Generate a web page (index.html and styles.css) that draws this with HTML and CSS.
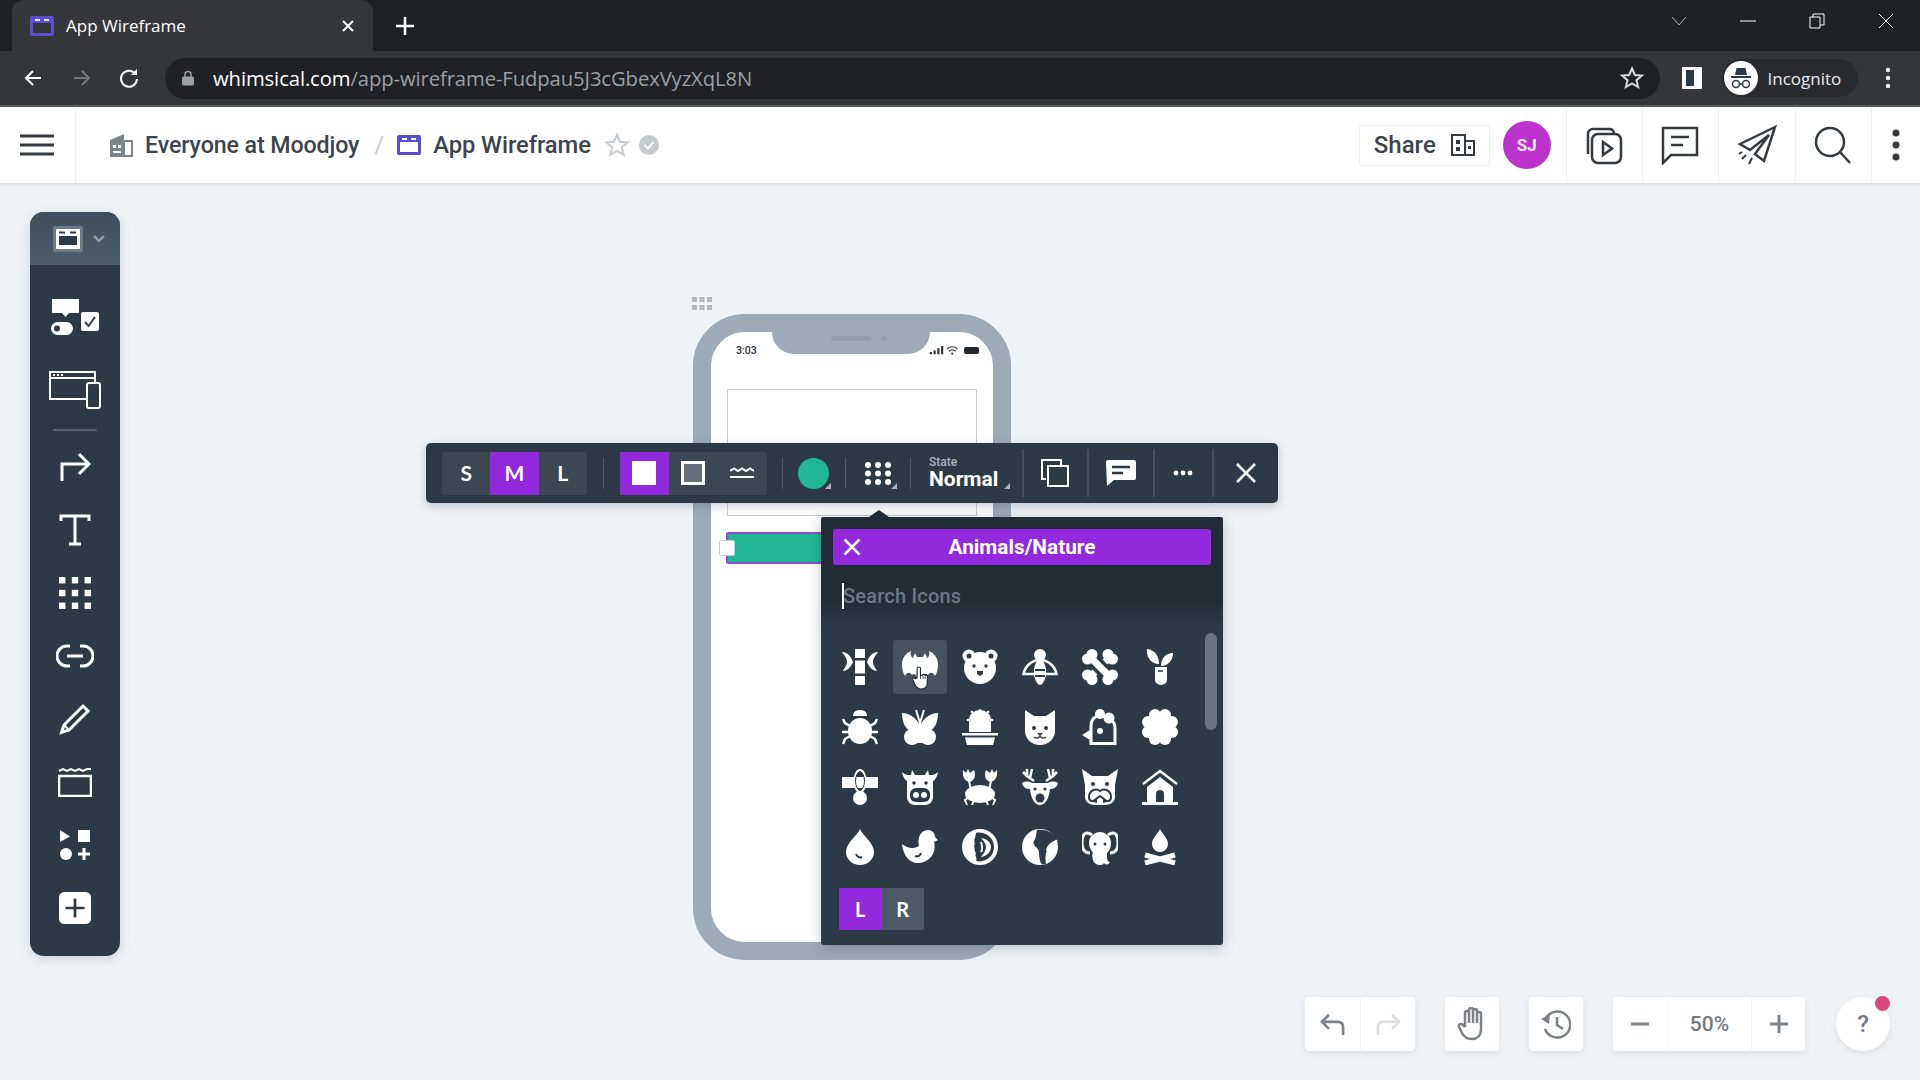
FILE: index.html
```html
<!DOCTYPE html>
<html lang="en">
<head>
<meta charset="utf-8">
<title>App Wireframe</title>
<link rel="stylesheet" href="styles.css">
</head>
<body>
<div class="tabstrip">
  <div class="tab">
    <svg class="fav" viewBox="0 0 24 20"><rect width="24" height="20" rx="2" class="f-purple"/><rect x="3" y="7" width="18" height="10" class="f-dark"/><rect x="5" y="3" width="5" height="2" class="f-light"/><rect x="14" y="3" width="5" height="2" class="f-light"/></svg>
    <span class="tab-title">App Wireframe</span>
    <svg class="tab-x" viewBox="0 0 14 14"><path d="M2 2L12 12M12 2L2 12" class="s-white s2"/></svg>
  </div>
  <svg class="newtab" viewBox="0 0 20 20"><path d="M10 1V19M1 10H19" class="s-white s25"/></svg>
  <div class="winctl">
    <svg viewBox="0 0 16 10" class="win-chev"><path d="M1 1L8 9L15 1" class="s-grey s1"/></svg>
    <svg viewBox="0 0 16 2" class="win-min"><path d="M0 1H16" class="s-white s1"/></svg>
    <svg viewBox="0 0 16 16" class="win-res"><path d="M1 4H11V15H1ZM4 4V1H15V12H11" class="s-white s1"/></svg>
    <svg viewBox="0 0 16 16" class="win-close"><path d="M1 1L15 15M15 1L1 15" class="s-white s1"/></svg>
  </div>
</div>
<div class="navbar">
  <svg class="nav-ic nav-back" viewBox="0 0 20 20"><path d="M18 10H3M10 3L3 10L10 17" class="s-white s2"/></svg>
  <svg class="nav-ic nav-fwd" viewBox="0 0 20 20"><path d="M2 10H17M10 3L17 10L10 17" class="s-dim s2"/></svg>
  <svg class="nav-ic nav-rel" viewBox="0 0 20 20"><path d="M16.5 6A8 8 0 1 0 18 11" class="s-white s2"/><path d="M18 1V7H12Z" class="f-white"/></svg>
  <div class="omni">
    <svg class="lock" viewBox="0 0 12 16"><path d="M3 7V4.500a3 3 0 0 1 6 0V7" class="s-lock s15"/><rect y="6.500" width="12" height="9" rx="1.500" class="f-lock"/></svg>
    <span class="url"><span class="url-host">whimsical.com</span>/app-wireframe-Fudpau5J3cGbexVyzXqL8N</span>
    <svg class="omni-star" viewBox="0 0 24 24"><path d="M12 2.500L14.800 9L21.800 9.600L16.500 14.200L18.100 21L12 17.400L5.900 21L7.500 14.200L2.200 9.600L9.200 9Z" class="s-light s2"/></svg>
  </div>
  <svg class="nav-side" viewBox="0 0 20 22"><rect width="20" height="22" rx="1" class="f-white"/><rect x="4" y="3" width="8" height="16" class="f-tool"/></svg>
  <div class="incog">
    <svg class="incog-ic" viewBox="0 0 34 34"><circle cx="17" cy="17" r="17" class="f-white"/><path d="M7 15H27V17H7ZM11 14L12.500 7H21.500L23 14Z" class="f-tool"/><circle cx="12" cy="23" r="3.500" class="s-tool s15"/><circle cx="22" cy="23" r="3.500" class="s-tool s15"/><path d="M15.500 23H18.500" class="s-tool s15"/></svg>
    <span>Incognito</span>
  </div>
  <svg class="nav-more" viewBox="0 0 6 22"><circle cx="3" cy="3" r="2.200" class="f-white"/><circle cx="3" cy="11" r="2.200" class="f-white"/><circle cx="3" cy="19" r="2.200" class="f-white"/></svg>
</div>
<header class="appbar">
  <div class="menu-cell"><svg class="burger" viewBox="0 0 34 22"><path d="M0 2H34M0 11H34M0 20H34" class="s-ink s3"/></svg></div>
  <nav class="crumbs">
    <svg class="org" viewBox="0 0 24 24"><path d="M1 7L15 1V24H1Z" class="f-org"/><path d="M15 8H23V23H15Z" class="s-org s2"/><rect x="4" y="12" width="3" height="3" class="f-white"/><rect x="9" y="12" width="3" height="3" class="f-white"/><rect x="4" y="18" width="8" height="2" class="f-white"/></svg>
    <span class="crumb crumb-org">Everyone at Moodjoy</span>
    <span class="slash">/</span>
    <svg class="doc" viewBox="0 0 24 20"><rect width="24" height="20" rx="2" class="f-purple"/><rect x="3" y="7" width="18" height="10" class="f-white"/><rect x="5" y="3" width="5" height="2" class="f-white"/><rect x="14" y="3" width="5" height="2" class="f-white"/></svg>
    <span class="crumb">App Wireframe</span>
    <svg class="c-star" viewBox="0 0 24 24"><path d="M12 2.500L14.800 9L21.800 9.600L16.500 14.200L18.100 21L12 17.400L5.900 21L7.500 14.200L2.200 9.600L9.200 9Z" class="s-mute s2"/></svg>
    <svg class="c-check" viewBox="0 0 20 20"><circle cx="10" cy="10" r="10" class="f-mute"/><path d="M5.500 10L9 13.500L14.500 7" class="s-white s2"/></svg>
  </nav>
  <div class="actions">
    <button class="share"><span>Share</span><svg viewBox="0 0 24 22" class="share-ic"><path d="M1 1H14V21H1ZM14 7H23V21H14Z" class="s-ink s2"/><rect x="5" y="6" width="4" height="4" class="f-ink"/><rect x="5" y="13" width="4" height="4" class="f-ink"/><rect x="17" y="12" width="3" height="3" class="f-ink"/></svg></button>
    <div class="avatar">SJ</div>
    <div class="act-cell"><svg viewBox="0 0 40 40"><path d="M4 29V9A5 5 0 0 1 9 4H25A5 5 0 0 1 30 8" class="s-ink s25"/><rect x="8" y="9" width="29" height="29" rx="6" class="s-ink s25"/><path d="M19 17L28 23.500L19 30Z" class="s-ink s25"/></svg></div>
    <div class="act-cell"><svg viewBox="0 0 40 40"><path d="M2 3H36V30H10L2 38Z" class="s-ink s25"/><path d="M10 12H28M10 20H22" class="s-ink s25"/></svg></div>
    <div class="act-cell"><svg viewBox="0 0 40 40"><path d="M38 2L3 19L13 25L32 10L18 29L27 36Z" class="s-ink s25"/><path d="M9 30L5 34M15 33L12 39M5 27L2 29" class="s-ink s2"/></svg></div>
    <div class="act-cell"><svg viewBox="0 0 40 40"><circle cx="17" cy="17" r="14" class="s-ink s25"/><path d="M27 27L37 38" class="s-ink s25"/></svg></div>
    <div class="act-cell last"><svg class="kebab" viewBox="0 0 8 32"><circle cx="4" cy="4" r="3.500" class="f-ink"/><circle cx="4" cy="16" r="3.500" class="f-ink"/><circle cx="4" cy="28" r="3.500" class="f-ink"/></svg></div>
  </div>
</header>
<main class="canvas">
  <svg class="handle" viewBox="0 0 20 13"><g class="f-handle"><rect width="5" height="5"/><rect x="7.500" width="5" height="5"/><rect x="15" width="5" height="5"/><rect y="8" width="5" height="5"/><rect x="7.500" y="8" width="5" height="5"/><rect x="15" y="8" width="5" height="5"/></g></svg>
  <div class="phone">
    <div class="notch"><span class="speaker"></span><span class="cam"></span></div>
    <div class="status">
      <span class="time">3:03</span>
      <svg class="status-ic" viewBox="0 0 40 12"><path d="M1 8h3v3H1zM6 6h3v5H6zM11 3h3v8h-3zM16 0h3v11h-3z" class="f-ink"/><path d="M24 4C28 0 34 0 38 4M26.500 7C29 4.500 33 4.500 35.500 7" class="s-ink s15"/><circle cx="31" cy="10" r="1.500" class="f-ink"/></svg>
      <span class="battery"></span>
    </div>
    <div class="screen-box"></div>
    <div class="bar"><span class="bar-handle"></span></div>
  </div>

  <aside class="tools">
    <div class="tools-head">
      <span class="sel-box"><svg viewBox="0 0 24 20"><rect width="24" height="20" rx="1" class="f-white"/><rect x="3" y="7" width="18" height="9" class="f-tool"/><rect x="3" y="2.500" width="6" height="2" class="f-tool"/><rect x="14" y="2.500" width="6" height="2" class="f-tool"/></svg></span>
      <svg class="sel-chev" viewBox="0 0 12 8"><path d="M1 1L6 6L11 1" class="s-chev s25"/></svg>
    </div>
    <div class="tool"><svg class="w50" viewBox="0 0 50 40"><path d="M2 3H29V17H19L15.500 21L12 17H2Z" class="f-white"/><rect x="1" y="26" width="22" height="13" rx="6.500" class="f-white"/><circle cx="7" cy="32.500" r="3" class="f-tool"/><rect x="31" y="16" width="18" height="19" rx="2" class="f-white"/><path d="M35 26L38.500 30L45 21" class="s-tool s2"/></svg></div>
    <div class="tool tool-second"><svg class="w52" viewBox="0 0 52 38"><path d="M38 28H1V1H46V12" class="s-white s2"/><path d="M1 7H46" class="s-white s2"/><rect x="38" y="12" width="13" height="25" rx="2" class="s-white s2"/><path d="M4 4H6M8 4H10M12 4H14" class="s-white s2"/></svg></div>
    <div class="tool-div"></div>
    <div class="tool"><svg class="w32" viewBox="0 0 32 32"><path d="M3 30V13H29M20 3L30 13L20 23" class="s-white s3"/></svg></div>
    <div class="tool"><svg class="w32" viewBox="0 0 32 32"><path d="M2 7V2H30V7M16 2V30M10 30H22" class="s-white s3"/></svg></div>
    <div class="tool"><svg class="w32" viewBox="0 0 30 30"><g class="f-white"><rect width="6" height="6"/><rect x="12" width="6" height="6"/><rect x="24" width="6" height="6"/><rect y="12" width="6" height="6"/><rect x="12" y="12" width="6" height="6"/><rect x="24" y="12" width="6" height="6"/><rect y="24" width="6" height="6"/><rect x="12" y="24" width="6" height="6"/><rect x="24" y="24" width="6" height="6"/></g></svg></div>
    <div class="tool"><svg class="w38" viewBox="0 0 38 24"><path d="M14 2H11A10 10 0 0 0 11 22H14M24 2H27A10 10 0 0 1 27 22H24M11 12H27" class="s-white s3"/></svg></div>
    <div class="tool"><svg class="w32" viewBox="0 0 32 32"><path d="M24 3L29 8L10 27L2.500 29.500L5 22Z" class="s-white s3"/><path d="M5 22L10 27" class="s-white s2"/></svg></div>
    <div class="tool"><svg class="w34" viewBox="0 0 34 30"><rect x="1" y="9" width="32" height="20" class="s-white s25"/><path d="M1 4L5 2L9 4L13 2L17 4L21 2L25 4L29 2L33 2" class="s-white s2"/></svg></div>
    <div class="tool"><svg class="w32" viewBox="0 0 32 32"><path d="M1 1L11 7.500L1 13Z" class="f-white"/><rect x="19" y="1" width="12" height="12" class="f-white"/><circle cx="7" cy="25" r="6" class="f-white"/><path d="M25 19V31M19 25H31" class="s-white s3"/></svg></div>
    <div class="tool"><svg class="w32" viewBox="0 0 30 30"><rect width="30" height="30" rx="5" class="f-white"/><path d="M15 6V24M6 15H24" class="s-tool s25"/></svg></div>
  </aside>

  <div class="ctx">
    <div class="seg seg-size">
      <span class="seg-b">S</span><span class="seg-b on">M</span><span class="seg-b">L</span>
    </div>
    <span class="sep sep-lead"></span>
    <div class="seg">
      <span class="seg-b on"><span class="sq-fill"></span></span>
      <span class="seg-b"><span class="sq-line"></span></span>
      <span class="seg-b"><svg class="wave" viewBox="0 0 24 12"><path d="M0 4L4 1.500L8 4L12 1.500L16 4L20 1.500L24 4M0 10H24" class="s-white s2"/></svg></span>
    </div>
    <span class="sep sep-after"></span>
    <span class="cell c62"><span class="dot"></span><span class="corner"></span></span>
    <span class="sep"></span>
    <span class="cell c64"><svg class="grid9" viewBox="0 0 26 23"><g class="f-white"><circle cx="3" cy="3" r="3"/><circle cx="13" cy="3" r="3"/><circle cx="23" cy="3" r="3"/><circle cx="3" cy="11.500" r="3"/><circle cx="13" cy="11.500" r="3"/><circle cx="23" cy="11.500" r="3"/><circle cx="3" cy="20" r="3"/><circle cx="13" cy="20" r="3"/><circle cx="23" cy="20" r="3"/></g></svg><span class="corner"></span></span>
    <span class="sep"></span>
    <span class="cell c-state"><span class="state"><small>State</small><b>Normal</b></span><span class="corner"></span></span>
    <span class="sep tall"></span>
    <span class="cell c63"><svg class="ic28" viewBox="0 0 28 28"><path d="M5 20H1V1H20V6" class="s-white s2"/><rect x="7" y="7" width="20" height="20" class="s-white s2"/></svg></span>
    <span class="sep tall"></span>
    <span class="cell c64"><svg class="ic-cmt" viewBox="0 0 30 26"><path d="M2 0H28A2 2 0 0 1 30 2V18A2 2 0 0 1 28 20H8L1 26L0 2A2 2 0 0 1 2 0Z" class="f-white"/><path d="M6 7H24M6 13H17" class="s-tool s25"/></svg></span>
    <span class="sep tall"></span>
    <span class="cell c57"><svg class="ic-more" viewBox="0 0 20 6"><circle cx="3" cy="3" r="2.400" class="f-white"/><circle cx="10" cy="3" r="2.400" class="f-white"/><circle cx="17" cy="3" r="2.400" class="f-white"/></svg></span>
    <span class="sep tall"></span>
    <span class="cell c64"><svg class="ic-x" viewBox="0 0 20 20"><path d="M1 1L19 19M19 1L1 19" class="s-white s25"/></svg></span>
  </div>

  <section class="panel">
    <span class="panel-tip"></span>
    <div class="panel-head">
      <div class="panel-title"><svg class="title-x" viewBox="0 0 18 18"><path d="M1.500 1.500L16.500 16.500M16.500 1.500L1.500 16.500" class="s-white s25"/></svg><span>Animals/Nature</span></div>
      <div class="search"><span class="caret"></span><span>Search Icons</span></div>
    </div>
    <span class="scroll"></span>
    <div class="icons">
      <span class="ic"><svg viewBox="0 0 36 36"><g class="f-white"><rect x="13" y="0" width="10" height="9"/><rect x="13" y="11.500" width="10" height="13"/><rect x="13" y="27" width="10" height="9"/><path d="M0 3C5 3 9 7 11 13C9 18 5 22 1 22C2 19 5 17 5 13C5 9 2 6 0 3Z"/><path d="M36 3C31 3 27 7 25 13C27 18 31 22 35 22C34 19 31 17 31 13C31 9 34 6 36 3Z"/></g></svg></span>
      <span class="ic hover"><svg viewBox="0 0 36 36"><path d="M0 15C0 9 4 4 9 2C8 5 9 8 11 9L13 4L15 8H21L23 4L25 9C27 8 28 5 27 2C32 4 36 9 36 15C36 20 35 24 33 27C31 23 28 23 26 26C24 24 22 25 20 30L18 34L16 30C14 25 12 24 10 26C8 23 5 23 3 27C1 24 0 20 0 15Z" class="f-white"/></svg><svg class="cursor" viewBox="0 0 20 28"><path d="M6 14V3A2 2 0 0 1 10 3V11L12 11A1.500 1.500 0 0 1 15 11.500A1.500 1.500 0 0 1 18 12.500V19C18 24 15 27 11 27C7 27 5 25 3 21L1 16C0.500 14 3 13 4 15Z" class="cursor-p"/><path d="M10 11V15M13 11.500V15M15.500 12V15" class="cursor-l"/></svg></span>
      <span class="ic"><svg viewBox="0 0 36 36"><circle cx="7" cy="7" r="6.500" class="f-white"/><circle cx="29" cy="7" r="6.500" class="f-white"/><circle cx="18" cy="19" r="16" class="f-white"/><circle cx="7" cy="7" r="2.500" class="f-tool"/><circle cx="29" cy="7" r="2.500" class="f-tool"/><circle cx="12" cy="17" r="1.700" class="f-tool"/><circle cx="24" cy="17" r="1.700" class="f-tool"/><path d="M15 22H21V25L18 27L15 25Z" class="f-tool"/></svg></span>
      <span class="ic"><svg viewBox="0 0 36 36"><circle cx="18" cy="6" r="6" class="f-white"/><path d="M18 11C10 11 3 17 1.500 25H34.500C33 17 26 11 18 11Z" class="s-white s25"/><path d="M18 10C22 12 25 18 24 26C23 32 20 36 18 36C16 36 13 32 12 26C11 18 14 12 18 10Z" class="f-white"/><path d="M13 21H23M13 27H23" class="s-tool s2"/></svg></span>
      <span class="ic"><svg viewBox="0 0 36 36"><path d="M8 8L28 28" class="s-white s7"/><path d="M28 8L23 13M13 23L8 28" class="s-white s7"/><g class="f-white"><circle cx="5.500" cy="10" r="5.500"/><circle cx="10" cy="5.500" r="5.500"/><circle cx="26" cy="30.500" r="5.500"/><circle cx="30.500" cy="26" r="5.500"/><circle cx="26" cy="5.500" r="5.500"/><circle cx="30.500" cy="10" r="5.500"/><circle cx="5.500" cy="26" r="5.500"/><circle cx="10" cy="30.500" r="5.500"/></g></svg></span>
      <span class="ic"><svg viewBox="0 0 36 36"><g class="f-white"><path d="M5 0C13 1 17 7 17 15C10 15 4 9 5 0Z"/><path d="M31 4C24 4 19 9 19 17C26 17 31 11 31 4Z"/><path d="M13 18H25V31A6 5 0 0 1 13 31Z"/></g><path d="M16 22H21" class="s-tool s15"/></svg></span>
      <span class="ic"><svg viewBox="0 0 36 36"><ellipse cx="18" cy="22" rx="12" ry="13" class="f-white"/><path d="M11 7C11 3 14 1 18 1C22 1 25 3 25 7H11Z" class="f-white"/><path d="M11 8H25" class="s-tool s15"/><path d="M1 10L3 14L8 17M0 23H7M1 35L3 30L8 27M35 10L33 14L28 17M36 23H29M35 35L33 30L28 27" class="s-white s25"/></svg></span>
      <span class="ic"><svg viewBox="0 0 36 36"><g class="f-white"><path d="M18 17C14 8 7 4 0 4C0 14 4 22 12 23C16 23 18 21 18 17Z"/><path d="M18 17C22 8 29 4 36 4C36 14 32 22 24 23C20 23 18 21 18 17Z"/><circle cx="10" cy="28" r="8"/><circle cx="26" cy="28" r="8"/><path d="M13 14H23V34H13Z"/></g><path d="M18 14L14 1M18 14L22 1" class="s-white s2"/></svg></span>
      <span class="ic"><svg viewBox="0 0 36 36"><g class="f-white"><path d="M7 23V11A11 10 0 0 1 29 11V23Z"/><rect x="0" y="24" width="36" height="2.500"/><path d="M3 28.500H33L31 36H5Z"/><circle cx="18" cy="1.500" r="1.500"/><circle cx="6" cy="11" r="1.300"/><circle cx="30" cy="11" r="1.300"/><circle cx="10" cy="3" r="1.300"/><circle cx="26" cy="3" r="1.300"/></g></svg></span>
      <span class="ic"><svg viewBox="0 0 36 36"><path d="M3 1L12 7H24L33 1V22C33 30 26 36 18 36C10 36 3 30 3 22Z" class="f-white"/><g class="f-tool"><circle cx="12" cy="19" r="2"/><circle cx="24" cy="19" r="2"/><path d="M15 24H21L18 27Z"/></g><path d="M12 28C15 30 17 29 18 27C19 29 21 30 24 28" class="s-tool s15"/></svg></span>
      <span class="ic"><svg viewBox="0 0 36 36"><path d="M9 34.500V17C9 10 13 7 18 7C27 7 33 12 33 19V34.500Z" class="s-white s3"/><circle cx="18" cy="5" r="5" class="f-white"/><circle cx="27" cy="9" r="5.500" class="f-white"/><path d="M0 26L8 21V31Z" class="f-white"/><circle cx="18" cy="22" r="3" class="f-white"/></svg></span>
      <span class="ic"><svg viewBox="0 0 36 36"><g class="f-white"><circle cx="13" cy="6" r="6"/><circle cx="23" cy="6" r="6"/><circle cx="13" cy="30" r="6"/><circle cx="23" cy="30" r="6"/><circle cx="6" cy="13" r="6"/><circle cx="6" cy="23" r="6"/><circle cx="30" cy="13" r="6"/><circle cx="30" cy="23" r="6"/><circle cx="18" cy="18" r="11"/></g></svg></span>
      <span class="ic"><svg viewBox="0 0 36 36"><ellipse cx="18" cy="12" rx="5.500" ry="11" class="s-white s2"/><path d="M0 8H36V19H0Z" class="f-white"/><ellipse cx="18" cy="12" rx="4.500" ry="9" class="s-tool s1"/><circle cx="18" cy="29" r="7" class="f-white"/></svg></span>
      <span class="ic"><svg viewBox="0 0 36 36"><path d="M0 3C3 6 6 6 9 6L10 1L13 6H23L26 1L27 6C30 6 33 6 36 3C35 8 33 11 31 12V28C31 33 27 36 23 36H13C9 36 5 33 5 28V12C3 11 1 8 0 3Z" class="f-white"/><circle cx="12" cy="14" r="1.800" class="f-tool"/><circle cx="24" cy="14" r="1.800" class="f-tool"/><rect x="8" y="19" width="20" height="14" rx="6" class="f-tool"/><circle cx="14" cy="26" r="3" class="f-white"/><circle cx="22" cy="26" r="3" class="f-white"/></svg></span>
      <span class="ic"><svg viewBox="0 0 36 36"><g class="f-white"><ellipse cx="18" cy="25" rx="15" ry="9"/><path d="M1 1L4 4L6 0L8 4L12 1C14 6 13 11 8 13C3 13 0 7 1 1Z"/><path d="M35 1L32 4L30 0L28 4L24 1C22 6 23 11 28 13C33 13 36 7 35 1Z"/></g><path d="M7 12L9 21M29 12L27 21M7 28L3 31L5 36M29 28L33 31L31 36M12 31L10 36M24 31L26 36" class="s-white s2"/></svg></span>
      <span class="ic"><svg viewBox="0 0 36 36"><path d="M5 0V7L12 12M1 3L5 7M10 0L8 9M31 0V7L24 12M35 3L31 7M26 0L28 9" class="s-white s25"/><path d="M0 14C3 12 7 12 10 14H26C29 12 33 12 36 14C35 18 32 20 28 20C27 30 23 36 18 36C13 36 9 30 8 20C4 20 1 18 0 14Z" class="f-white"/><circle cx="13" cy="20" r="1.600" class="f-tool"/><circle cx="23" cy="20" r="1.600" class="f-tool"/><circle cx="18" cy="29" r="4.500" class="f-tool"/></svg></span>
      <span class="ic"><svg viewBox="0 0 36 36"><path d="M0 0L10 7H26L36 0L33 16V28C33 33 28 36 23 36H13C8 36 3 33 3 28V16Z" class="f-white"/><circle cx="11" cy="15" r="2" class="f-tool"/><circle cx="25" cy="15" r="2" class="f-tool"/><path d="M7 28C7 21 14 19 18 22C22 19 29 21 29 28C29 33 24 33 22 30L18 27L14 30C12 33 7 33 7 28Z" class="s-tool s2"/><path d="M11 33C11 30 13 29 15 30V34ZM25 33C25 30 23 29 21 30V34Z" class="f-tool"/></svg></span>
      <span class="ic"><svg viewBox="0 0 36 36"><path d="M1 15L18 2L35 15" class="s-white s25"/><path d="M5 18L18 8L31 18V33H5Z" class="f-white"/><rect y="33" width="36" height="3" class="f-white"/><path d="M14 33V25A4 4 0 0 1 22 25V33Z" class="f-tool"/></svg></span>
      <span class="ic"><svg viewBox="0 0 36 36"><path d="M18 0C15 7 4 14 4 23A14 13 0 0 0 32 23C32 14 21 7 18 0Z" class="f-white"/><path d="M14 25C15 28 18 29 20 28" class="s-tool s2"/></svg></span>
      <span class="ic"><svg viewBox="0 0 36 36"><path d="M0 15C6 20 12 20 17 17C15 10 18 1 26 1C31 1 33 5 33 8L36 11L32 13C35 24 27 34 16 34C7 34 1 26 0 15Z" class="f-white"/><path d="M13 27C16 28 18 27 19 24" class="s-tool s2"/></svg></span>
      <span class="ic"><svg viewBox="0 0 36 36"><circle cx="18" cy="18" r="18" class="f-white"/><path d="M14 4C21 2 32 7 32 18C32 29 21 34 14 32C16 29 12 27 14 24C12 22 13 19 12 17C14 14 11 12 13 9Z" class="f-tool"/><path d="M19 9C26 10 29 14 29 18C29 23 25 27 19 28C22 24 24 21 24 18C24 15 22 12 19 9Z" class="f-white"/><path d="M19 13C20 16 21 20 19 23" class="s-white s2"/></svg></span>
      <span class="ic"><svg viewBox="0 0 36 36"><circle cx="18" cy="18" r="18" class="f-white"/><path d="M15 1C14 6 14 9 12 12C10 15 14 18 16 20C18 24 16 30 20 35.500L24 35C22 24 26 16 35 10C32 5 26 0 15 1Z" class="f-tool"/><path d="M36 11C30 12 24 16 24 22C28 20 32 16 36 11Z" class="f-white"/></svg></span>
      <span class="ic"><svg viewBox="0 0 36 36"><path d="M10 6C3 1 0 6 0 14C0 20 3 24 8 24" class="s-white s3"/><path d="M26 6C33 1 36 6 36 14C36 20 33 24 28 24" class="s-white s3"/><path d="M7 14C7 7 13 3 18 3C23 3 29 7 29 14C29 19 27 22 25 24V28C25 31 26 33 28 33C27 36 23 36 22 34C21 36 19 36 18 36C16 36 12 35 11 31C10 27 10 25 11 24C9 21 7 18 7 14Z" class="f-white"/><circle cx="13" cy="15" r="1.500" class="f-tool"/><circle cx="23" cy="15" r="1.500" class="f-tool"/></svg></span>
      <span class="ic"><svg viewBox="0 0 36 36"><path d="M18 0C16 5 10 9 10 15A8 8 0 0 0 26 15C26 9 20 5 18 0Z" class="f-white"/><path d="M3 26L33 34M33 26L3 34" class="s-white s5"/></svg></span>
    </div>
    <div class="lr"><span class="lr-b on">L</span><span class="lr-b">R</span></div>
  </section>

  <div class="bottom">
    <div class="bgroup">
      <span class="bcell"><svg class="b-ic" viewBox="0 0 28 26"><path d="M26 25V16C26 12 24 10 20 10H3M10 2L2 10L10 18" class="s-grey2 s3"/></svg></span>
      <span class="bcell"><svg class="b-ic" viewBox="0 0 28 26"><path d="M2 25V16C2 12 4 10 8 10H25M18 2L26 10L18 18" class="s-pale s3"/></svg></span>
    </div>
    <div class="bgroup"><span class="bcell"><svg class="b-hand" viewBox="0 0 30 34"><path d="M8 20V6A2 2 0 0 1 12 6V16M12 16V3A2 2 0 0 1 16 3V16M16 16V4A2 2 0 0 1 20 4V16M20 16V7A2 2 0 0 1 24 7V22C24 29 20 32 15 32C10 32 7 30 5 26L2 20C1 17 4 16 6 18L8 20" class="s-grey2 s25"/></svg></span></div>
    <div class="bgroup"><span class="bcell"><svg class="b-hand" viewBox="0 0 30 30"><path d="M5 9A13 13 0 1 1 4 20" class="s-grey2 s25"/><path d="M0 10L8 15L9 5Z" class="f-grey2"/><path d="M16 8V16L22 20" class="s-grey2 s25"/></svg></span></div>
    <div class="bgroup">
      <span class="bcell"><svg class="b-pm" viewBox="0 0 20 20"><path d="M1 10H19" class="s-grey2 s3"/></svg></span>
      <span class="bcell zoomval">50%</span>
      <span class="bcell"><svg class="b-pm" viewBox="0 0 20 20"><path d="M1 10H19M10 1V19" class="s-grey2 s3"/></svg></span>
    </div>
    <div class="help">?<span class="help-dot"></span></div>
  </div>
</main>
</body>
</html>
```

FILE: styles.css
```css
* { box-sizing: border-box; }
html, body { margin: 0; height: 100%; }
body {
  width: 1920px; height: 1080px; overflow: hidden;
  display: flex; flex-direction: column;
  font-family: Roboto, "Open Sans", sans-serif;
  background: #f0f3f6;
}
svg { display: block; flex: none; fill: none; }

/* svg paint helpers */
.f-white { fill: #fff; } .f-purple { fill: #5b4ed1; } .f-dark { fill: #35363a; } .f-light { fill: #e6e3fa; }
.f-tool { fill: #2d3a45; } .f-lock { fill: #9aa0a6; } .f-ink { fill: #343a40; } .f-org { fill: #7d858c; }
.f-mute { fill: #c4c9ce; } .f-handle { fill: #b3b9bf; } .f-grey2 { fill: #7c8287; }
.s-white { stroke: #fff; } .s-grey { stroke: #b5b7ba; } .s-dim { stroke: #77797d; } .s-lock { stroke: #9aa0a6; }
.s-light { stroke: #dadce0; } .s-tool { stroke: #2d3a45; } .s-ink { stroke: #343a40; } .s-org { stroke: #7d858c; }
.s-mute { stroke: #c9ced2; } .s-chev { stroke: #8b97a2; } .s-grey2 { stroke: #7c8287; } .s-pale { stroke: #dcdfe2; }
.s1 { stroke-width: 1; } .s15 { stroke-width: 1.5; } .s2 { stroke-width: 2; } .s25 { stroke-width: 2.5; }
.s3 { stroke-width: 3; } .s5 { stroke-width: 5; } .s6 { stroke-width: 6; } .s7 { stroke-width: 7; }

/* browser chrome */
.tabstrip { height: 51px; flex: none; background: #202124; display: flex; align-items: center; padding-left: 12px; }
.tab { width: 361px; height: 51px; background: #35363a; border-radius: 12px 12px 0 0; display: flex; align-items: center; padding-left: 18px; color: #fff; }
.fav { width: 24px; height: 20px; margin-top: 1px; }
.tab-title { margin-left: 12px; font: 400 17px "Open Sans", sans-serif; flex: 1; }
.tab-x { width: 14px; height: 14px; margin-right: 18px; }
.newtab { width: 20px; height: 20px; margin-left: 22px; }
.winctl { margin-left: auto; display: flex; align-items: center; height: 100%; padding-bottom: 9px; }
.win-chev { width: 16px; height: 10px; margin-right: 52.500px; }
.win-min { width: 16px; height: 2px; margin-right: 53.500px; }
.win-res { width: 16px; height: 16px; margin-right: 53px; }
.win-close { width: 16px; height: 16px; margin-right: 26px; }

.navbar { height: 56px; flex: none; background: #35363a; border-bottom: 2px solid #5a5c60; display: flex; align-items: center; position: relative; }
.nav-ic { width: 20px; height: 20px; }
.nav-back { margin-left: 23px; }
.nav-fwd { margin-left: 29px; }
.nav-rel { margin-left: 27px; }
.omni { width: 1494.500px; height: 41px; margin-left: 26px; background: #202124; border-radius: 21px; display: flex; align-items: center; padding-left: 17px; }
.lock { width: 12px; height: 16px; }
.url { margin-left: 19px; font: 400 20.250px "Open Sans", sans-serif; letter-spacing: -0.1px; color: #9aa0a6; white-space: nowrap; }
.url-host { color: #fff; }
.omni-star { width: 24px; height: 24px; margin-left: auto; margin-right: 16px; }
.nav-side { width: 20px; height: 22px; margin-left: 22px; }
.incog { width: 136px; height: 38px; margin-left: 20px; border-radius: 19px; background: #292a2e; display: flex; align-items: center; padding-left: 2px; color: #e8eaed; font: 400 17px "Open Sans", sans-serif; }
.incog-ic { width: 34px; height: 34px; margin-right: 10px; }
.nav-more { width: 6px; height: 22px; margin-left: 27px; }

/* app header */
.appbar { height: 76px; flex: none; background: #fff; display: flex; align-items: center; box-shadow: 0 1px 3px rgba(60,70,80,.18); position: relative; z-index: 2; }
.menu-cell { width: 76px; height: 100%; display: flex; align-items: center; justify-content: center; border-right: 1px solid #eceef0; padding-right: 1px; }
.burger { width: 34px; height: 22px; }
.crumbs { display: flex; align-items: center; padding-left: 33px; }
.org { width: 24px; height: 24px; }
.crumb { font-size: 23.800px; font-weight: 500; color: #3d444b; letter-spacing: -0.1px; white-space: nowrap; }
.crumb-org { font-size: 23.200px; margin-left: 12px; }
.slash { margin: 0 10px 0 15px; font-size: 24px; color: #c8cdd2; }
.doc { width: 24px; height: 20px; margin-right: 12px; margin-left: 3px; }
.c-star { width: 26px; height: 26px; margin-left: 13px; }
.c-check { width: 20px; height: 20px; margin-left: 9px; }
.actions { margin-left: auto; display: flex; align-items: center; height: 100%; }
.share { width: 131px; height: 41px; background: #fff; border: 1px solid #eceef0; border-radius: 2px; display: flex; align-items: center; padding: 0 14px; font: 500 24px Roboto, sans-serif; color: #3d444b; justify-content: space-between; }
.share-ic { width: 24px; height: 22px; }
.avatar { width: 48px; height: 48px; border-radius: 50%; background: #bb33cc; color: #f6e6f8; margin-left: 13px; margin-right: 15px; display: flex; align-items: center; justify-content: center; font-weight: 700; font-size: 17px; }
.act-cell { width: 76.300px; height: 100%; border-left: 1px solid #f0f1f3; display: flex; align-items: center; justify-content: center; }
.act-cell svg { width: 40px; height: 40px; }
.act-cell.last { width: 49px; }
.act-cell svg.kebab { width: 8px; height: 32px; }

/* canvas */
.canvas { flex: 1; position: relative; overflow: hidden; background: #f0f3f6; }
.handle { position: absolute; left: 692px; top: 114px; width: 20px; height: 13px; }
.phone { position: absolute; left: 693px; top: 131px; width: 318px; height: 646px; border: 18px solid #9eabb6; border-radius: 52px; background: #fff; }
.notch { position: absolute; left: 61px; top: -1px; width: 158px; height: 23px; background: #9eabb6; border-radius: 0 0 22px 22px; display: flex; justify-content: center; gap: 10px; padding: 5px 0 0 16px; }
.speaker { width: 40px; height: 5px; background: #929fab; border-radius: 3px; }
.cam { width: 6px; height: 5px; background: #929fab; border-radius: 50%; }
.status { position: absolute; left: 25px; right: 14px; top: 12px; display: flex; align-items: center; }
.time { font: 500 10.500px Roboto, sans-serif; color: #2b3036; }
.status-ic { width: 30px; height: 9px; margin-left: auto; }
.battery { width: 15px; height: 7px; background: #22272c; border-radius: 2px; margin-left: 5px; }
.screen-box { position: absolute; left: 16px; top: 57px; width: 250px; height: 127px; border: 1px solid #c9cdd1; background: #fff; }
.bar { position: absolute; left: 15px; top: 200px; width: 120px; height: 32px; background: #21b795; border: 2px solid #8a4fce; border-radius: 2px; }
.bar-handle { position: absolute; left: -9px; top: 6px; width: 16px; height: 16px; background: #fff; border: 1px solid #c9cdd1; border-radius: 2px; }

/* left tool rail */
.tools { position: absolute; left: 30px; top: 29px; width: 90px; height: 744px; background: #2d3a45; border-radius: 14px; box-shadow: 0 3px 12px rgba(60,80,100,.2); display: flex; flex-direction: column; align-items: center; }
.tools-head { width: 100%; height: 54px; margin-bottom: 18px; flex: none; background: linear-gradient(#3e4e5c, #4c5c6a); border-radius: 14px 14px 0 0; display: flex; align-items: center; justify-content: center; gap: 10px; padding-left: 7px; border-bottom: 1px solid #28343e; }
.sel-box { width: 30px; height: 26px; background: #6d7b87; border-radius: 2px; display: flex; align-items: center; justify-content: center; }
.sel-box svg { width: 24px; height: 20px; }
.sel-chev { width: 12px; height: 8px; }
.tool { height: 63px; flex: none; display: flex; align-items: center; justify-content: center; }
.tool-second { margin-top: 11px; }
.tool-div { width: 44px; height: 2px; background: #56646f; margin: 7.500px 0 5px; flex: none; border-radius: 1px; }
.w50 { width: 50px; height: 40px; } .w52 { width: 52px; height: 38px; } .w32 { width: 32px; height: 32px; }
.w38 { width: 38px; height: 24px; } .w34 { width: 34px; height: 30px; }

/* context toolbar */
.ctx { position: absolute; left: 426px; top: 260px; width: 852px; height: 60px; background: #2d3a45; border-radius: 5px; box-shadow: 0 3px 10px rgba(40,55,70,.25); display: flex; align-items: center; padding-left: 16px; z-index: 3; }
.seg { display: flex; height: 43px; background: #3b4853; border-radius: 3px; }
.seg-b { width: 49px; display: flex; align-items: center; justify-content: center; color: #fff; font-weight: 700; font-size: 21px; font-family: Lato, sans-serif; padding-bottom: 1px; }
.seg-size .seg-b { width: 48.340px; }
.seg-b.on { background: #9329dd; }
.sep { width: 1px; height: 31px; background: #4e5b66; flex: none; }
.sep.tall { width: 2px; height: 48px; background: #46535e; }
.sep-lead { margin: 0 16px; }
.sep-after { margin-left: 15px; }
.sq-fill { width: 24px; height: 24px; background: #fff; }
.sq-line { width: 24px; height: 24px; border: 3px solid #fff; background: #66707a; }
.wave { width: 24px; height: 12px; }
.cell { height: 100%; display: flex; align-items: center; justify-content: center; position: relative; flex: none; }
.c62 { width: 62px; } .c64 { width: 64px; } .c63 { width: 63px; } .c57 { width: 57px; }
.c-state { width: 111px; justify-content: flex-start; padding-left: 18px; }
.dot { width: 31px; height: 31px; border-radius: 50%; background: #21b795; }
.corner { position: absolute; right: 6px; bottom: 14px; width: 0; height: 0; border-style: solid; border-width: 0 0 6px 6px; border-color: transparent transparent #aab3bb transparent; }
.c62 .corner { right: 14px; border-color: transparent transparent #c9a6d6 transparent; }
.c64 .corner { right: 13px; }
.c-state .corner { right: 12px; }
.grid9 { width: 26px; height: 23px; }
.state { display: flex; flex-direction: column; color: #fff; padding-bottom: 2px; }
.state small { font-size: 12px; line-height: 13px; font-weight: 500; color: #aab4bd; }
.state b { font-size: 21px; line-height: 20px; font-weight: 700; }
.ic28 { width: 28px; height: 28px; }
.ic-cmt { width: 30px; height: 26px; }
.ic-more { width: 20px; height: 6px; }
.ic-x { width: 20px; height: 20px; }

/* icon panel */
.panel { position: absolute; left: 821px; top: 334px; width: 402px; height: 428px; background: #2d3a45; border-radius: 3px; box-shadow: 0 3px 14px rgba(40,55,70,.28); z-index: 2; display: flex; flex-direction: column; }
.panel-tip { position: absolute; left: 48px; top: -7px; border-style: solid; border-width: 0 10px 7px 10px; border-color: transparent transparent #232c35 transparent; }
.panel-head { height: 111px; flex: none; background: linear-gradient(#232c35 75%, #2d3a45); border-radius: 3px 3px 0 0; padding: 12px 12px 0; }
.panel-title { height: 36px; background: #9329dd; border-radius: 3px; position: relative; display: flex; align-items: center; justify-content: center; color: #fff; font-size: 20.800px; font-weight: 700; }
.title-x { position: absolute; left: 10px; top: 9px; width: 18px; height: 18px; }
.search { display: flex; align-items: center; height: 26px; margin: 18px 0 0 9px; color: #6b7885; font-size: 20px; font-weight: 500; letter-spacing: .2px; }
.caret { width: 2px; height: 26px; background: #fff; margin-right: -1px; }
.scroll { position: absolute; left: 384px; top: 116px; width: 12px; height: 97px; background: #677481; border-radius: 6px; }
.icons { display: grid; grid-template-columns: repeat(6, 54px); grid-auto-rows: 54px; gap: 6px; padding: 12px 0 0 12px; }
.ic { position: relative; display: flex; align-items: center; justify-content: center; border-radius: 3px; }
.ic > svg:first-child { width: 36px; height: 36px; }
.ic.hover { background: #46535f; }
.cursor { position: absolute; left: 19px; top: 26px; width: 17px; height: 24px; }
.cursor-p { fill: #fff; stroke: #20262c; stroke-width: 1.300; }
.cursor-l { stroke: #20262c; stroke-width: 1; }
.lr { display: flex; width: 85px; height: 42px; margin: 14px 0 0 18px; background: #4d5a66; border-radius: 2px; }
.lr-b { flex: 1; display: flex; align-items: center; justify-content: center; color: #fff; font: 700 20px Lato, sans-serif; }
.lr-b.on { background: #9329dd; border-radius: 2px 0 0 2px; }

/* bottom controls */
.bottom { position: absolute; right: 30px; bottom: 29px; display: flex; gap: 30px; height: 54px; }
.bgroup { display: flex; background: #fff; border-radius: 4px; box-shadow: 0 2px 6px rgba(60,70,80,.12); }
.bcell { width: 54px; display: flex; align-items: center; justify-content: center; border-left: 1px solid #f3f4f5; }
.bcell:first-child { border-left: 0; }
.bgroup:first-child .bcell { width: 55px; }
.zoomval { width: 84px; color: #74797e; font-size: 21px; font-weight: 500; }
.b-ic { width: 25px; height: 23px; }
.b-hand { width: 30px; height: 34px; }
.b-pm { width: 20px; height: 20px; }
.help { width: 54px; height: 54px; margin-left: 1px; border-radius: 50%; background: #fff; box-shadow: 0 2px 6px rgba(60,70,80,.12); position: relative; display: flex; align-items: center; justify-content: center; color: #74797e; font-size: 24px; font-weight: 500; }
.help-dot { position: absolute; right: 0; top: -1px; width: 15px; height: 15px; border-radius: 50%; background: #d9487a; }
```
